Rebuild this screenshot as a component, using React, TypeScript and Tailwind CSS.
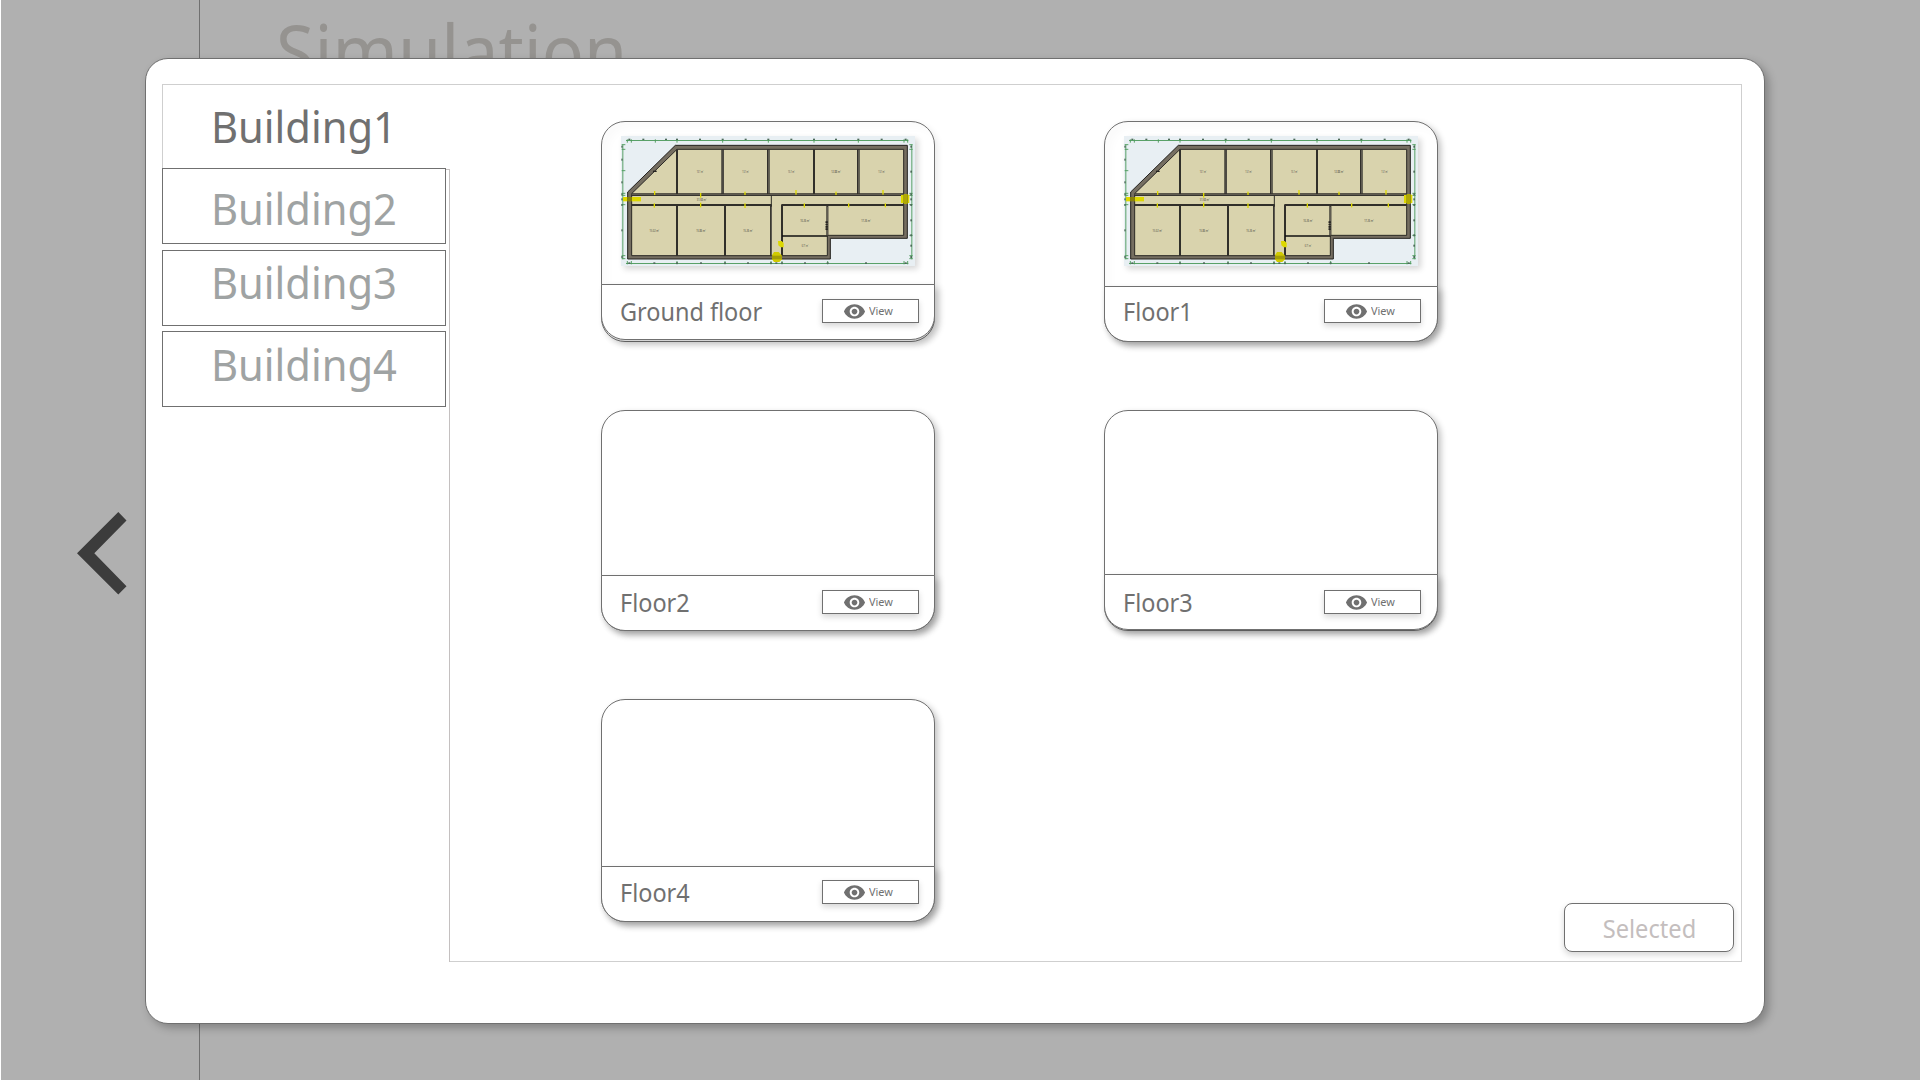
import React from "react";
import { MdVisibility } from "react-icons/md";

const ROOMS: [number, number, string][] = [
  [330, 188, "13.1 m²"],
  [467, 188, "13.1 m²"],
  [604, 188, "13.1 m²"],
  [738, 188, "12.88 m²"],
  [875, 188, "13.1 m²"],
  [335, 272, "31.68 m²"],
  [193, 365, "15.02 m²"],
  [333, 365, "15.86 m²"],
  [474, 365, "15.26 m²"],
  [645, 335, "10.26 m²"],
  [828, 335, "17.26 m²"],
  [645, 412, "6.71 m²"],
];

const DOORS: [number, number, number][] = [
  [194, 243, 12],
  [332, 249, 14],
  [465, 245, 10],
  [618, 240, 14],
  [738, 245, 10],
  [879, 240, 14],
  [193, 280, 13],
  [332, 278, 14],
  [465, 280, 14],
  [643, 280, 13],
  [776, 280, 12],
  [886, 280, 12],
];

const TOP_TICKS = [112, 124, 196, 261, 398, 535, 672, 805, 942, 953];
const BOTTOM_TICKS = [112, 124, 261, 405, 543, 576, 713, 942, 953];
const LEFT_TICKS = [104, 118, 182, 250, 256, 284, 437, 446];
const RIGHT_TICKS = [104, 118, 250, 256, 284, 376, 437, 446];

function FloorPlan() {
  return (
    <svg
      viewBox="93 78 882 390"
      className="block h-[130px] w-[294px] shadow-[3px_3px_6px_rgba(0,0,0,0.16)]"
    >
      <rect x="93" y="78" width="882" height="390" fill="#e8eff3" />
      <g stroke="#4d9b5c" strokeWidth="2.8" fill="none">
        <path d="M108 91.5H955M108 460.5H955M98.5 104V448M965.5 104V448" />
        {TOP_TICKS.map((x) => (
          <path key={x} d={`M${x} 88V98`} />
        ))}
        {BOTTOM_TICKS.map((x) => (
          <path key={x} d={`M${x} 453V463`} />
        ))}
        {LEFT_TICKS.map((y) => (
          <path key={y} d={`M95 ${y}H106`} />
        ))}
        {RIGHT_TICKS.map((y) => (
          <path key={y} d={`M958 ${y}H968`} />
        ))}
      </g>
      <g fill="#4c6a58">
        {[118, 160, 228, 261, 330, 398, 467, 535, 604, 672, 738, 805, 875, 947].map((x) => (
          <rect key={x} x={x - 3} y="86" width="6" height="4" />
        ))}
        {[118, 193, 261, 333, 405, 474, 543, 559, 576, 645, 713, 828, 947].map((x) => (
          <rect key={x} x={x - 3} y="457" width="6" height="5" />
        ))}
        {[110, 149, 217, 253, 268, 285, 361, 441].map((y) => (
          <rect key={y} x="94" y={y - 3} width="4" height="6" />
        ))}
        {[110, 185, 253, 268, 285, 331, 376, 407, 441].map((y) => (
          <rect key={y} x="961" y={y - 3} width="5" height="6" />
        ))}
      </g>
      <path
        d="M256 106H952V385H721V447H113V246Z"
        fill="#756e61"
        stroke="#24221f"
        strokeWidth="3"
      />
      <path
        d="M261 118H941V376H712V437H125V251Z"
        fill="#d9d3ad"
        stroke="#2b2925"
        strokeWidth="3"
      />
      <path d="M125 254H941" stroke="#2f2d29" strokeWidth="8" />
      <path d="M125 254H941" stroke="#69645a" strokeWidth="3" />
      <g stroke="#312f2a" fill="none">
        <path
          d="M125 285H545M574 285H941M261 118V252M672 118V252M261 285V437M405 285V437M543 285V437M576 285V437M712 285V376"
          strokeWidth="6"
        />
        <path d="M398 118V252M535 118V252M805 118V252" strokeWidth="8" />
        <path d="M544 256V285" strokeWidth="3" />
        <path d="M576 378H712" stroke="#111" strokeWidth="4" />
      </g>
      <path
        d="M399 120V250M536 120V250M806 120V250M544 290V436M713 290V376"
        stroke="#69645a"
        strokeWidth="3"
      />
      <path d="M710 334V360" stroke="#24221f" strokeWidth="7" strokeDasharray="5 2" />
      <path d="M189 184H200" stroke="#24221f" strokeWidth="4" />
      <g fill="#ddd800">
        {DOORS.map(([x, y, h]) => (
          <rect key={`${x}-${y}`} x={x - 2} y={y} width="4" height={h} />
        ))}
        <rect x="99" y="261" width="13" height="13" />
        <rect x="125" y="261" width="28" height="13" />
        <path d="M564 393H575L581 399V412H572L565 406Z" />
        <path d="M552 426H566L576 437V448L568 456H552L546 448V436Z" fill="#d0ca00" />
        <path d="M546 437H576V448H546Z" fill="#a39c08" />
        <rect x="112" y="261" width="13" height="13" fill="#8a8309" />
        <path d="M933 255H941V279H933ZM953 254H958V279H953Z" />
        <rect x="941" y="252" width="12" height="30" fill="#b0a806" />
      </g>
      <g
        fill="#3f3d38"
        fontSize="10"
        textAnchor="middle"
        fontFamily="'Noto Sans', sans-serif"
      >
        {ROOMS.map(([x, y, t]) => (
          <text key={`${x}-${y}`} x={x} y={y} textLength={t.length > 7 ? 29 : 20} lengthAdjust="spacingAndGlyphs">
            {t}
          </text>
        ))}
      </g>
    </svg>
  );
}

interface FloorCardProps {
  name: string;
  card: string;
  footer: string;
  body?: string;
  plan?: boolean;
}

function FloorCard({ name, card, footer, body = "", plan = false }: FloorCardProps) {
  return (
    <div
      className={`flex w-[334px] flex-col rounded-[24px] border border-[#707070] bg-white ${card}`}
    >
      <div className={`flex-1 pt-[14px] pl-[19px] ${body}`}>{plan && <FloorPlan />}</div>
      <div
        className={`-mx-px flex justify-between rounded-b-[24px] border border-[#707070] bg-white pl-[18px] shadow-[4px_4px_7px_rgba(0,0,0,0.2)] ${footer}`}
      >
        <span className="origin-left scale-x-[0.938] text-[25px] leading-[26px] whitespace-nowrap text-[#707070]">
          {name}
        </span>
        <button className="mt-px flex h-6 w-[97px] items-center border border-[#707070] bg-white pl-5 text-[#707070] shadow-[0_3px_6px_rgba(0,0,0,0.16)]">
          <MdVisibility className="size-[23px] shrink-0" />
          <span className="ml-[3px] origin-left scale-x-[0.95] text-[11.5px] leading-none">View</span>
        </button>
      </div>
    </div>
  );
}

function Tab({ label, box }: { label: string; box: string }) {
  return (
    <button className={`flex items-start pl-12 text-left text-[44px] leading-none ${box}`}>
      <span className="origin-left scale-x-[0.947]">{label}</span>
    </button>
  );
}

export default function App() {
  return (
    <div className="relative h-[1080px] w-[1920px] overflow-hidden border-l border-white bg-[#b0b0b0] font-['Noto_Sans','Open_Sans',sans-serif]">
      <div className="flex h-full">
        <div className="w-[199px] shrink-0 border-r border-[#707070]" />
        <h1 className="mt-[13px] ml-[76px] origin-left scale-x-[0.933] text-[75px] leading-none whitespace-nowrap text-[#959390]">
          Simulation
        </h1>
      </div>

      <button className="absolute top-[512px] left-[76px]" aria-label="Back">
        <svg width="50" height="83" viewBox="0 0 50 83" fill="#3c3c3c">
          <path d="M41.3 0L49.5 8.5L17.3 41.3L49.5 74.2L41.3 82.5L0 41.3Z" />
        </svg>
      </button>

      <div className="absolute top-[58px] left-[144px] flex h-[966px] w-[1620px] rounded-[23px] border border-[#707070] bg-white pt-[25px] pl-4 shadow-[4px_4px_8px_rgba(0,0,0,0.25)]">
        <div className="flex w-[287px] shrink-0 flex-col">
          <Tab
            label="Building1"
            box="h-[84px] w-[288px] border-t border-l border-[#cfcfcf] pt-[19px] text-[#707070]"
          />
          <Tab label="Building2" box="h-[76px] w-[284px] border border-[#707070] pt-[17px] text-[#9fa3a3]" />
          <Tab
            label="Building3"
            box="mt-[6px] h-[76px] w-[284px] border border-[#707070] pt-[9px] text-[#9fa3a3]"
          />
          <Tab
            label="Building4"
            box="mt-[5px] h-[76px] w-[284px] border border-[#707070] pt-[10px] text-[#9fa3a3]"
          />
        </div>
        <div className="mt-[85px] -ml-[3px] h-[793px] w-1 shrink-0 border-t border-r border-[#c4c0c0]" />
        <div className="flex h-[878px] w-[1292px] shrink-0 border-t border-r border-b border-[#cfcfcf]">
          <div className="mt-9 ml-[151px] grid h-fit grid-cols-[334px_334px] items-start gap-x-[169px] gap-y-[68px]">
            <FloorCard
              name="Ground floor"
              plan
              card="h-[221px] shadow-[3px_3px_6px_rgba(0,0,0,0.08)]"
              footer="mb-px h-[56px] pt-[13px] pr-[15px]"
              body="rounded-t-[23px] shadow-[inset_6px_6px_8px_rgba(0,0,0,0.02)]"
            />
            <FloorCard
              name="Floor1"
              plan
              card="h-[221px] shadow-[3px_3px_6px_rgba(0,0,0,0.24)]"
              footer="-mb-px h-[56px] pt-[11px] pr-4"
              body="rounded-t-[23px] shadow-[inset_6px_6px_8px_rgba(0,0,0,0.02)]"
            />
            <FloorCard
              name="Floor2"
              card="h-[221px] shadow-[3px_3px_6px_rgba(0,0,0,0.24)]"
              footer="-mb-px h-[56px] pt-[13px] pr-[15px]"
            />
            <FloorCard
              name="Floor3"
              card="h-[221px] shadow-[3px_3px_6px_rgba(0,0,0,0.24)]"
              footer="h-[56px] pt-[14px] pr-4"
            />
            <FloorCard
              name="Floor4"
              card="h-[223px] shadow-[3px_3px_6px_rgba(0,0,0,0.24)]"
              footer="-mb-px h-[56px] pt-[12px] pr-[15px]"
            />
          </div>
          <button className="mt-auto mr-[7px] mb-[9px] ml-auto flex h-[49px] w-[170px] shrink-0 items-center justify-center rounded-lg border border-[#707070] bg-white pt-[2px] text-[25px] text-[#c4bebe] shadow-[0_3px_6px_rgba(0,0,0,0.16)]">
            <span className="scale-x-[0.945]">Selected</span>
          </button>
        </div>
      </div>
    </div>
  );
}
